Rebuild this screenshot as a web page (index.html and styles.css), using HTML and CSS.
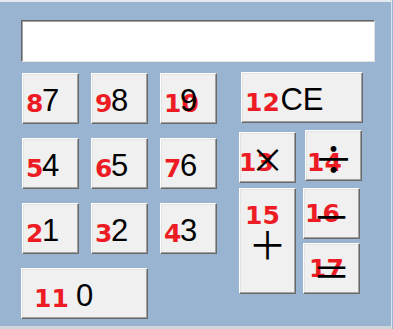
FILE: index.html
```html
<!DOCTYPE html>
<html lang="ja">
<head>
    <meta charset="UTF-8">
    <title>電卓</title>
    <link rel="stylesheet" href="styles.css">
</head>
<body>
    <div class="window">
        <div class="display"></div>

        <div class="keys">
            <div class="numpad">
                <button class="key"><span class="tag">8</span><span class="face">7</span></button>
                <button class="key"><span class="tag">9</span><span class="face">8</span></button>
                <button class="key"><span class="tag">10</span><span class="face">9</span></button>
                <button class="key"><span class="tag">5</span><span class="face">4</span></button>
                <button class="key"><span class="tag">6</span><span class="face">5</span></button>
                <button class="key"><span class="tag">7</span><span class="face">6</span></button>
                <button class="key"><span class="tag">2</span><span class="face">1</span></button>
                <button class="key"><span class="tag">3</span><span class="face">2</span></button>
                <button class="key"><span class="tag">4</span><span class="face">3</span></button>
                <button class="key key-wide"><span class="tag tag-zero">11</span><span class="face">0</span></button>
            </div>

            <div class="ops">
                <button class="key key-ce"><span class="tag">12</span><span class="face">CE</span></button>
                <div class="ops-row">
                    <button class="key"><span class="tag tag-times">13</span><span class="face sym sym-times">×</span></button>
                    <button class="key key-div"><span class="tag tag-div">14</span><span class="face sym sym-div">÷</span></button>
                </div>
                <div class="ops-grid">
                    <button class="key key-plus"><span class="tag tag-plus">15</span><span class="face sym">＋</span></button>
                    <button class="key"><span class="tag tag-minus">16</span><span class="face sym">－</span></button>
                    <button class="key"><span class="tag tag-equals">17</span><span class="face sym">＝</span></button>
                </div>
            </div>
        </div>
    </div>
</body>
</html>
```

FILE: styles.css
```css
* {
    box-sizing: border-box;
}

body {
    margin: 0;
    background-color: #99b4d1;
    font-family: "Liberation Sans", Arial, sans-serif;
    overflow: hidden;
}

.window {
    width: 392px;
    height: 329px;
    padding: 18px 0 0 21px;
    border-top: 2px solid #e4e9ef;
    border-right: 1px solid #dbe4ee;
    border-bottom: 3px solid #d0d6de;
}

.display {
    width: 354px;
    height: 42px;
    background-color: #ffffff;
    border: 1px solid;
    border-color: #646464 #e3e3e3 #e3e3e3 #646464;
    box-shadow: inset 1px 1px 0 #a0a0a0;
}

.keys {
    display: flex;
    gap: 22px;
    margin-top: 10px;
}

.numpad {
    display: grid;
    grid-template-columns: repeat(3, 57px);
    grid-auto-rows: 51px;
    column-gap: 12px;
    row-gap: 14px;
    margin-top: 1px;
    margin-left: 1px;
}

.key {
    position: relative;
    display: flex;
    align-items: center;
    justify-content: center;
    padding: 3px 0 0;
    background-color: #f0f0f0;
    border: 1px solid;
    border-color: #ffffff #696969 #696969 #ffffff;
    box-shadow: inset -1px -1px 0 #a0a0a0, inset 1px 1px 0 #e3e3e3;
    font-family: "Liberation Sans", Arial, sans-serif;
    font-size: 31px;
    color: #000000;
    cursor: pointer;
}

.key-wide {
    grid-column: span 2;
    margin-left: -1px;
}

.face {
    position: relative;
    z-index: 1;
    line-height: 1;
}

.tag {
    position: absolute;
    left: 3px;
    bottom: 7px;
    z-index: 0;
    font-family: "DejaVu Sans", sans-serif;
    font-weight: bold;
    font-size: 25px;
    line-height: 25px;
    color: #ed1c24;
}

.tag-zero {
    left: 12px;
}

.ops {
    display: flex;
    flex-direction: column;
    width: 124px;
}

.key-ce {
    width: 122px;
    height: 51px;
    margin-left: 2px;
}

.ops-row {
    display: grid;
    grid-template-columns: 57px 57px;
    grid-template-rows: 51px;
    column-gap: 9px;
    margin-top: 9px;
}

.key-div {
    margin-top: -2px;
    margin-bottom: 2px;
}

.ops-grid {
    display: grid;
    grid-template-columns: 57px 57px;
    grid-template-rows: 51px 51px;
    column-gap: 7px;
    row-gap: 4px;
    margin-top: 5px;
}

.key-plus {
    grid-row: span 2;
}

.sym {
    font-family: "Noto Sans CJK JP", sans-serif;
    font-size: 38px;
}

.sym-times {
    font-size: 34px;
}

.sym-div {
    font-size: 40px;
}

.tag-times {
    left: -1px;
}

.tag-div {
    left: 1px;
    bottom: 5px;
}

.tag-plus {
    left: 5px;
    top: 14px;
    bottom: auto;
}

.tag-minus {
    left: 1px;
    bottom: 12px;
}

.tag-equals {
    left: 5px;
    bottom: 12px;
}
```
